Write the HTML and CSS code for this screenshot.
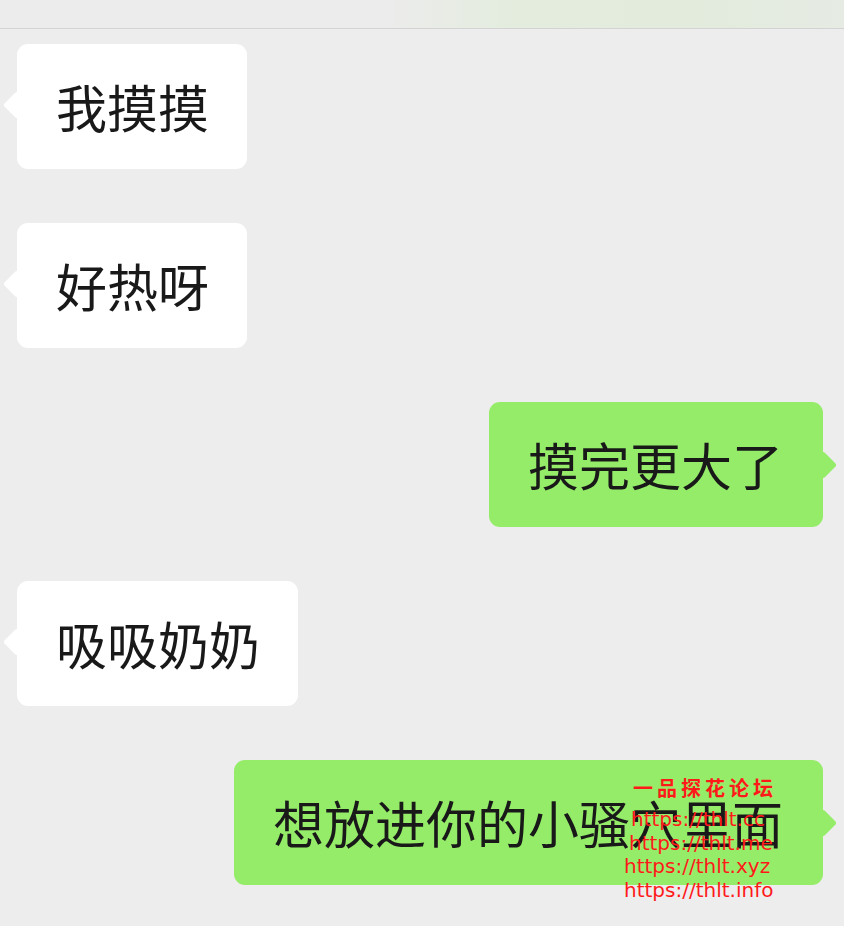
FILE: index.html
```html
<!DOCTYPE html>
<html lang="zh-CN">
<head>
    <meta charset="UTF-8">
    <meta name="viewport" content="width=device-width, initial-scale=1.0">
    <title>聊天</title>
    <link rel="stylesheet" href="styles.css">
</head>
<body>
    <header class="top-bar"></header>

    <main class="chat">
        <div class="row left">
            <div class="bubble">我摸摸</div>
        </div>
        <div class="row left">
            <div class="bubble">好热呀</div>
        </div>
        <div class="row right">
            <div class="bubble">摸完更大了</div>
        </div>
        <div class="row left">
            <div class="bubble">吸吸奶奶</div>
        </div>
        <div class="row right">
            <div class="bubble">想放进你的小骚穴里面</div>
        </div>
    </main>

    <div class="watermark">
        <div class="wm-title">一品探花论坛</div>
        <div class="wm-link l1">https://thlt.cc</div>
        <div class="wm-link l2">https://thlt.me</div>
        <div class="wm-link">https://thlt.xyz</div>
        <div class="wm-link">https://thlt.info</div>
    </div>
</body>
</html>
```

FILE: styles.css
```css
* {
    margin: 0;
    padding: 0;
    box-sizing: border-box;
}

body {
    font-family: "Noto Sans CJK SC", "Noto Sans", sans-serif;
    background-color: #ededed;
    color: #191919;
    width: 844px;
    height: 926px;
    overflow: hidden;
    position: relative;
}

.top-bar {
    height: 29px;
    border-bottom: 1px solid #d3d3d3;
    background: linear-gradient(90deg, #ececec 0%, #ececec 45%, #e3ecdd 62%, #e2ebdc 80%, #e6ebe3 100%);
}

.chat {
    display: flex;
    flex-direction: column;
    gap: 54px;
    padding: 15px 21px 0 17px;
}

.row {
    display: flex;
}

.row.right {
    justify-content: flex-end;
}

.bubble {
    position: relative;
    height: 125px;
    display: flex;
    align-items: center;
    padding: 0 38px 0 39px;
    font-size: 51px;
    line-height: 1;
    border-radius: 11px;
    background-color: #fff;
    white-space: nowrap;
}

.bubble::before {
    content: "";
    position: absolute;
    top: 50%;
    width: 20px;
    height: 20px;
    border-radius: 3px;
    background-color: inherit;
    transform: translateY(-50%) rotate(45deg);
}

.left .bubble::before {
    left: -10px;
    margin-top: -2px;
}

.right .bubble {
    background-color: #95ec69;
    padding: 0 40px 0 39px;
}

.right .bubble::before {
    right: -10px;
}

.watermark {
    position: absolute;
    left: 624px;
    top: 776px;
    color: #ff1a1a;
    display: flex;
    flex-direction: column;
    align-items: flex-start;
}

.wm-title {
    font-family: "Noto Sans CJK SC", sans-serif;
    font-size: 20px;
    font-weight: bold;
    letter-spacing: 4px;
    line-height: 24px;
    margin-left: 9px;
    height: 32px;
}

.wm-link {
    font-family: "DejaVu Sans", sans-serif;
    font-size: 20px;
    line-height: 23.5px;
}

.wm-link.l1 {
    margin-left: 7px;
}

.wm-link.l2 {
    margin-left: 5px;
}
```
